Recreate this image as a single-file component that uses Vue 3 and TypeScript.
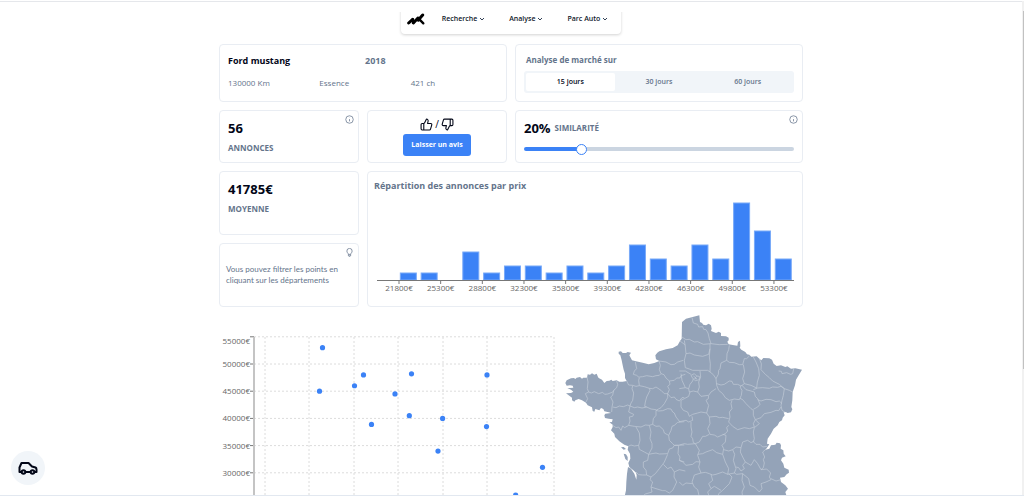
<script setup lang="ts">
import { computed, ref } from 'vue'

const menus = ['Recherche', 'Analyse', 'Parc Auto']
const periods = [15, 30, 60]
const period = ref(15)
const similarity = ref(20)
const trackFill = computed(() => ({
  background: `linear-gradient(to right, #3b82f6 ${similarity.value}%, #cbd5e1 ${similarity.value}%)`,
}))

const counts = [0, 1, 1, 0, 4, 1, 2, 2, 1, 2, 1, 2, 5, 3, 2, 5, 3, 11, 7, 3]
const slot = 20.83
const bars = counts.map((n, i) => ({ x: 11 + i * slot, h: n * 7 })).filter((b) => b.h > 0)
const priceTicks = Array.from({ length: 10 }, (_, i) => ({
  x: 31 + i * slot * 2,
  label: `${21800 + i * 3500}€`,
}))

const yOf = (price: number) => 49 + ((50000 - price) * 27.2) / 5000
const levels = [55000, 50000, 45000, 40000, 35000, 30000]
const columns = [46, 90, 135, 179, 224, 268, 335]
const points: [number, number][] = [
  [103.5, 53000], [100.5, 45000], [144.5, 48000], [135.5, 46000], [152.5, 38900],
  [176, 44500], [192.5, 48200], [190.3, 40500], [223.6, 40000], [219, 34000],
  [268, 48000], [267.5, 38500], [323.5, 31000], [296.7, 25900],
]

const west = [
  '83,200 86,215 84,235 88,245 78,250 85,265 80,275',
  '88,245 96,248 105,244 118,250 130,246 136,252 145,251 158,246 165,240',
  '172,212 175,222 172,232 163,240 160,255 154,260 161,275 158,290 157,305',
  '160,290 170,292 180,287 192,289 205,284 212,287',
  '202,212 208,224 220,225 230,228 240,226 238,210 240,202 232,195 222,192 225,182 232,175 228,155',
  '220,226 218,235 223,248 220,270 215,278 212,287',
  '240,200 250,199 262,196 280,199 290,196 300,195 305,190 300,178 303,165 299,152',
  '305,190 314,193 320,203 330,212 332,222 325,228 330,238 325,250',
  '240,226 255,229 270,234 280,235 290,230 305,240 315,250 325,250 325,262 315,280 305,292 290,300',
  '270,234 272,240 262,260 258,275 256,288 262,290 275,296 290,298',
  '212,287 225,292 235,290 248,293 262,290',
  '212,287 208,305 223,312 220,318 210,320 212,332 208,345 225,348 245,350 258,344 270,345 280,342 282,325 290,315 290,300',
  '160,345 170,352 178,350 185,360 190,347 196,352 208,345',
  '230,350 240,368 242,390 238,405 225,407 215,404 207,408',
  '270,345 275,365 272,385 278,400 278,413 268,432 255,425 240,417 238,405',
  '280,342 290,348 300,347 312,358 315,368 328,375 335,360 338,348 345,345 355,336 375,334',
  '362,335 350,320 345,308 340,305 335,296 325,295 310,301 298,302 290,300',
  '328,375 330,390 340,400 345,405 340,413 330,416 325,430 300,431 290,428 278,430 268,432 265,450 252,455 252,470 260,480 262,494 275,500 288,490 300,475 310,462 315,455 325,432',
  '345,405 358,405 356,430 362,440 360,450 375,455',
  '345,405 375,404',
  '312,462 325,475 335,470 345,485 344,500 352,515 346,528 340,540 330,548 318,541 310,541 290,535 275,530 280,515 272,508 275,500',
  '230,485 238,493 250,494 262,494',
  '275,530 278,545 258,551 245,562',
  '345,485 360,478 378,482',
  '325,250 335,262 345,260 350,267 360,272 368,262 375,262',
  '330,212 345,210 352,203 362,203 365,196 378,192',
  '299,152 320,155 335,163 345,162 355,155 372,150',
  '362,92 378,104',
]
const east = [
  '38,22 42,38 55,42 58,50 70,49 73,57 80,58 86,68 90,85 95,100',
  '8,80 20,88 30,87 45,95 55,94 72,102 95,100 120,103 145,102',
  '20,130 32,128 45,134 70,138 88,132 92,115 92,100',
  '15,90 18,110 20,130 15,150 18,172 30,176 40,180 62,180 85,180 92,185',
  '92,115 90,140 93,160 92,185 102,193 110,205',
  '150,105 148,118 143,130 142,150 125,158 122,175 118,180 117,192 110,205 112,225',
  '142,150 150,156 165,157 180,163 190,163 195,145 202,145 210,137',
  '192,163 196,185 190,205 195,220',
  '112,220 125,224 135,222 150,212 158,213 162,222 175,222 185,227 195,220 215,225 232,233',
  '222,140 230,155 238,175 240,195 234,215 232,233',
  '240,145 246,160 245,178 258,192 270,202 280,212 300,222 315,235',
  '298,182 306,183 308,190 322,187 334,192 340,190 343,176',
  '222,238 235,233 250,232 270,234 280,230 295,231 305,228 315,235 330,240 340,245',
  '315,235 312,255 308,270 305,285 308,300 318,306',
  '188,225 200,238 215,242 225,245 228,258 235,265 242,282 235,290 222,297',
  '235,268 245,272 260,267 275,268 290,274 300,272 308,280',
  '112,225 118,240 130,250 138,262 150,270 165,266 180,268 186,255 188,240 182,230 186,226',
  '182,264 190,268 200,280 215,295 222,300 222,315 228,328 222,340 225,350 210,355 195,352 175,358 160,348 148,335 152,320 150,305 158,295 155,280 158,270',
  '228,328 245,322 255,310 275,306 290,300 298,301 305,290',
  '228,328 240,340 225,352 222,365 225,385 222,394 230,402 242,402 250,410 263,408',
  '110,235 95,245 88,255 87,265 80,270 88,285 82,308 90,320 110,318 120,322 130,321 148,325',
  '35,195 45,190 52,197 60,198 60,208 48,211 40,204 35,195',
  '42,196 52,206 46,204 52,198',
  '0,182 18,182 35,192',
  '5,190 8,210 18,232 28,235 32,222 40,212 42,205',
  '28,235 30,245 42,242 55,245 60,230 58,215 64,200 62,182',
  '0,235 18,232',
  '32,245 28,258 15,265 5,270 5,290 12,300 25,305 30,318 40,312 55,308 65,305 82,308',
  '55,245 65,258 87,255',
  '0,334 20,330 28,335 40,330 38,318',
  '35,335 35,350 38,365 35,378 40,385 42,397 48,400 60,395 70,378 78,378 90,372',
  '90,320 92,340 85,355 92,372 105,374 115,380 138,370 145,362 142,352 148,345',
  '0,404 15,400 25,402 48,400 60,420 55,435 62,455 50,454 40,462 20,465 10,455 0,450',
  '55,432 70,430 80,425 100,418 112,427 130,432 133,415 128,405 138,395 140,375 130,372',
  '133,418 148,422 160,418 170,410 185,412 190,395 205,390 215,397 225,392',
  '62,455 58,470 65,488 78,486 90,490 100,494 110,492 130,485 145,492 148,475 138,455 130,432',
  '145,492 165,488 170,475 162,450 166,432 160,418',
  '185,412 183,425 190,440 198,455 190,465 195,475 185,482 178,472 170,470',
  '198,455 215,465 225,448 235,460 245,478 252,472 255,458 252,448 256,440 250,425 262,415',
  '245,478 262,476 274,488 270,500 275,508 260,515 245,520 248,535 240,545 225,530 212,525 208,505 190,490 172,492 165,488',
  '65,488 45,494 38,515 45,530 55,538 60,560',
  '95,492 100,510 88,520 95,535 85,545 90,560',
  '40,520 20,518 10,525 0,515',
  '148,490 158,500 150,520 130,540 118,550 115,562',
  '190,490 188,510 195,530 188,545 190,562',
  '275,505 290,512 305,508',
  '95,535 105,528 125,540',
]
</script>

<template>
  <div class="page">
    <nav class="nav" aria-label="Navigation principale">
      <a href="#" class="brand" aria-label="Accueil">
        <svg viewBox="0 0 54 36" class="logo" aria-hidden="true">
          <path d="M5 30L17 19M19 30L33 15M34 21L47 6" stroke="#000" stroke-width="9" stroke-linecap="round" fill="none" />
          <path d="M17 19L19 29M33 15L34 22M38 20L49 31" stroke="#000" stroke-width="7" stroke-linecap="round" fill="none" />
        </svg>
      </a>
      <button v-for="m in menus" :key="m" type="button" class="menu">
        {{ m }}
        <svg viewBox="0 0 6 6" class="chevron" aria-hidden="true"><path d="M1 2l2 2 2-2" /></svg>
      </button>
    </nav>

    <main class="content">
      <div class="cards">
        <section class="card vehicle">
          <div class="vehicle-head"><h1>Ford mustang</h1><strong>2018</strong></div>
          <div class="vehicle-specs"><span>130000 Km</span><span>Essence</span><span>421 ch</span></div>
        </section>

        <section class="card market">
          <h2>Analyse de marché sur</h2>
          <div class="tabs" role="tablist">
            <button
              v-for="p in periods" :key="p" type="button" role="tab"
              :aria-selected="period === p" :class="{ active: period === p }" @click="period = p"
            >{{ p }} jours</button>
          </div>
        </section>

        <section class="card stat">
          <b>56</b><span>ANNONCES</span>
          <svg class="corner" viewBox="0 0 24 24" aria-hidden="true"><circle cx="12" cy="12" r="10" /><path d="M12 17v-6M12 7.500v.5" /></svg>
        </section>

        <section class="card review">
          <div class="thumbs">
            <svg viewBox="0 0 24 24" aria-hidden="true"><path d="M7 10v12M15 5.880L14 10h5.830a2 2 0 0 1 1.920 2.560l-2.330 8A2 2 0 0 1 17.500 22H4a2 2 0 0 1-2-2v-8a2 2 0 0 1 2-2h2.760a2 2 0 0 0 1.790-1.110L12 2a3.130 3.130 0 0 1 3 3.880Z" /></svg>
            <span>/</span>
            <svg viewBox="0 0 24 24" aria-hidden="true"><path d="M17 14V2M9 18.120L10 14H4.170a2 2 0 0 1-1.920-2.560l2.330-8A2 2 0 0 1 6.500 2H20a2 2 0 0 1 2 2v8a2 2 0 0 1-2 2h-2.760a2 2 0 0 0-1.790 1.110L12 22a3.130 3.130 0 0 1-3-3.880Z" /></svg>
          </div>
          <button type="button">Laisser un avis</button>
        </section>

        <section class="card similarity">
          <label for="similarity"><b>{{ similarity }}%</b><span>SIMILARITÉ</span></label>
          <input id="similarity" v-model.number="similarity" type="range" min="0" max="100" :style="trackFill">
          <svg class="corner" viewBox="0 0 24 24" aria-hidden="true"><circle cx="12" cy="12" r="10" /><path d="M12 17v-6M12 7.500v.5" /></svg>
        </section>

        <section class="card stat">
          <b>41785€</b><span>MOYENNE</span>
        </section>

        <section class="card prices">
          <h2>Répartition des annonces par prix</h2>
          <svg viewBox="0 0 434 106" class="histogram" role="img" aria-label="Répartition des annonces par prix">
            <rect v-for="b in bars" :key="b.x" :x="b.x + 0.5" :y="84 - b.h" width="16" :height="b.h" class="bar" />
            <path d="M9 84.500H426" class="axis" />
            <g v-for="t in priceTicks" :key="t.label">
              <path :d="`M${t.x} 84v4`" class="axis" />
              <text :x="t.x" y="95" text-anchor="middle">{{ t.label }}</text>
            </g>
          </svg>
        </section>

        <section class="card tip">
          <p>Vous pouvez filtrer les points en cliquant sur les départements</p>
          <svg class="corner" viewBox="0 0 24 24" aria-hidden="true"><path d="M9 17c0-3-4-4-4-9a7 7 0 0 1 14 0c0 5-4 6-4 9ZM9 17v4h6v-4M11 23h2" /></svg>
        </section>
      </div>

      <div class="explore">
        <svg viewBox="0 0 341 200" class="scatter" role="img" aria-label="Prix des annonces">
          <path v-for="c in columns" :key="c" :d="`M${c} 22V200`" class="grid" />
          <path v-for="l in levels" :key="l" :d="`M35 ${yOf(l)}H335`" class="grid" />
          <g v-for="l in levels" :key="l">
            <path :d="`M31 ${yOf(l)}h4`" class="axis" />
            <text x="31" :y="Math.max(yOf(l), 26) + 3" text-anchor="end">{{ l }}€</text>
          </g>
          <path d="M35 22V200" class="y-axis" />
          <circle v-for="(p, i) in points" :key="i" :cx="p[0]" :cy="yOf(p[1])" r="2.600" class="dot" />
        </svg>
        <svg viewBox="2 14 729 600" class="map" role="img" aria-label="Départements de France">
          <path
            class="land"
            d="M368 35L380 25 400 20 420 15 422 35 428 38 432 43 440 45 448 40 455 45 457 55 455 62 470 68 478 64 485 68 485 77 500 78 508 82 508 90 504 94 508 102 520 104 534 106 536 95 542 91 543 108 541 112 546 118 558 125 563 132 570 133 576 139 592 138 600 145 606 150 612 143 630 144 638 148 643 160 652 167 665 165 678 170 684 168 695 175 708 174 728 178 718 195 710 208 707 225 700 245 699 270 696 290 699 297 695 306 685 308 679 305 673 306 676 315 670 322 668 330 660 335 655 345 643 355 635 370 625 385 623 400 630 402 623 412 618 418 630 415 635 405 648 403 652 397 662 399 665 405 664 415 672 420 673 430 679 438 668 442 665 450 672 460 675 472 688 478 689 487 682 492 675 500 662 502 665 515 678 525 686 535 678 545 682 558 695 614H190L196 558 200 540 201 515 203 490 206 470 215 475 225 490 231 508 232 495 230 487 222 480 210 470 207 458 213 445 212 430 205 418 207 408 195 403 180 393 167 380 165 370 155 360 160 350 160 343 150 336 158 335 160 327 148 325 137 323 135 315 138 310 155 308 148 306 135 303 132 296 125 293 120 300 108 296 105 304 100 302 98 291 85 285 80 277 68 270 58 266 48 270 45 274 38 270 38 262 28 255 20 249 35 248 42 244 35 238 24 233 32 233 42 232 40 226 32 225 22 226 18 218 22 210 35 204 45 203 47 207 52 202 62 200 68 205 72 202 83 202 85 192 92 193 98 189 105 193 112 190 116 200 118 203 128 208 135 218 142 212 150 211 156 208 160 212 172 210 180 214 190 214 202 212 197 203 197 190 193 178 190 165 187 150 183 135 178 130 178 124 185 123 190 128 200 128 205 125 215 127 210 135 214 142 218 150 230 153 250 157 268 162 285 158 300 152 290 147 288 135 294 127 300 123 320 117 340 113 355 105 362 92 367 85Z"
          />
          <path class="land" d="M185 411l8-1 7 6-7 2zM193 430l7 2 5 8 0 12-7-6z" />
          <g class="borders">
            <polyline v-for="b in west" :key="b" :points="b" />
            <g transform="translate(360 0)"><polyline v-for="b in east" :key="b" :points="b" /></g>
          </g>
        </svg>
      </div>
    </main>

    <button type="button" class="garage" aria-label="Mes véhicules">
      <svg viewBox="0 0 20 14" aria-hidden="true">
        <path d="M3.500 11H1.500V6.500L3.500 2H10.500L14 5.500 17.500 6.500Q18.500 7 18.500 8.500V11H16.500M7.500 11h5" />
        <circle cx="5.500" cy="11" r="1.800" /><circle cx="14.500" cy="11" r="1.800" />
      </svg>
    </button>
    <div class="scrollbar" aria-hidden="true"><div class="scroll-thumb"></div></div>
  </div>
</template>

<style>
body { background: #fff; }
</style>

<style scoped>
* { box-sizing: border-box; }
.page {
  position: relative;
  height: 100vh;
  overflow: hidden;
  padding-right: 2px;
  border-top: 1px solid #fff;
  border-bottom: 1px solid #e2e8f0;
  font: 8px/12px "Open Sans", "Noto Sans", sans-serif;
  color: #64748b;
  box-shadow: inset 0 1px #e5e7eb;
}
button { font: inherit; color: inherit; border: 0; padding: 0; background: none; cursor: pointer; }
h1, h2, p { margin: 0; }
.nav {
  display: flex;
  align-items: center;
  width: fit-content;
  height: 30px;
  margin: 3px auto 0;
  padding: 0 13px 0 6px;
  border-radius: 4px;
  box-shadow: 0 1px 3px rgba(0, 0, 0, .18);
  clip-path: inset(8px -4px -5px -4px);
}
.brand { display: flex; margin-right: 17px; }
.logo { width: 18px; height: 12px; }
.menu { display: flex; align-items: center; gap: 2px; color: #0f172a; font-size: 7px; font-weight: 600; }
.menu + .menu { margin-left: 24px; }
.chevron { width: 6px; height: 6px; fill: none; stroke: #334155; stroke-width: 1; }
.content { max-width: 584px; margin: 10px auto 0; }
.cards {
  display: grid;
  grid-template-columns: repeat(4, 1fr);
  grid-template-rows: 58px 53px 64px 64px;
  gap: 8px;
}
.card { position: relative; border: 1px solid #e9edf3; border-radius: 4px; padding: 8px; }
.vehicle, .market, .similarity { grid-column: span 2; }
.prices { grid-column: 2 / span 3; grid-row: 3 / span 2; padding: 0; }
h2 { font-size: 9px; line-height: 14px; font-weight: 700; }
.vehicle { padding: 9px 4px 8px 8px; }
.vehicle-head { display: grid; grid-template-columns: 1fr 1fr; font-size: 9px; line-height: 14px; }
.vehicle-head h1 { font-size: 9px; font-weight: 700; color: #020617; }
.vehicle-specs { display: grid; grid-template-columns: repeat(3, 1fr); margin-top: 9px; }
.market h2 { font-size: 8px; margin: 0 2px 4px; }
.tabs { display: flex; height: 22px; padding: 2px; border-radius: 3px; background: #f1f5f9; }
.tabs button { flex: 1; font-size: 7px; font-weight: 600; border-radius: 2px; }
.tabs .active { background: #fff; color: #020617; }
.stat { display: flex; flex-direction: column; gap: 6px; padding-top: 9px; }
.stat b, .similarity b { font-size: 13px; line-height: 16px; color: #020617; }
.stat span, .similarity span { font-weight: 700; }
.corner { position: absolute; top: 4px; right: 4px; width: 9px; height: 9px; fill: none; stroke: #64748b; stroke-width: 2; }
.review { display: flex; flex-direction: column; align-items: center; padding: 6px; }
.thumbs { display: flex; align-items: center; gap: 2px; height: 14px; font-size: 10px; color: #020617; }
.thumbs svg { width: 13px; height: 13px; fill: none; stroke: #020617; stroke-width: 2; stroke-linejoin: round; }
.review button { height: 22px; margin-top: 3px; padding: 0 8px; border-radius: 3px; background: #3b82f6; color: #fff; font-size: 7px; font-weight: 700; }
.similarity { padding-top: 9px; }
.similarity label { display: flex; align-items: center; gap: 4px; }
.similarity input { appearance: none; display: block; width: 100%; height: 4px; margin: 11px 0 0; border-radius: 2px; }
.similarity input::-webkit-slider-thumb { appearance: none; width: 11px; height: 11px; border: 1px solid #3b82f6; border-radius: 50%; background: #fff; }
.prices h2 { margin: 7px 6px 3px; }
.histogram { display: block; width: 100%; }
.bar { fill: #3b82f6; stroke: #78a9f8; stroke-width: 1; }
.axis { fill: none; stroke: #777; stroke-width: 1; }
text { fill: #666; font-size: 8px; }
.tip { display: flex; align-items: center; padding: 0 6px; font-family: Lato, "Open Sans", sans-serif; font-size: 8px; line-height: 11px; }
.explore { display: grid; grid-template-columns: 341fr 243fr; margin-top: 8px; }
.scatter, .map { display: block; width: 100%; }
.grid { stroke: #dcdcdc; stroke-width: 1; stroke-dasharray: 2 2; }
.y-axis { stroke: #c4c4c4; stroke-width: 2; }
.dot { fill: #3b82f6; }
.land { fill: #94a3b8; }
.borders { fill: none; stroke: #c3ccd8; stroke-width: 2; stroke-linejoin: round; }
.garage { position: absolute; left: 11px; bottom: 10px; display: flex; align-items: center; justify-content: center; width: 34px; height: 34px; border-radius: 50%; background: #f1f5f9; }
.garage svg { width: 20px; height: 14px; fill: none; stroke: #020617; stroke-width: 2; stroke-linejoin: round; }
.scrollbar { position: absolute; top: 0; right: 0; bottom: 0; width: 2px; padding-top: 10px; background: #f1f1f1; }
.scroll-thumb { height: 74%; margin-left: 1px; background: #c1c1c1; }
</style>
